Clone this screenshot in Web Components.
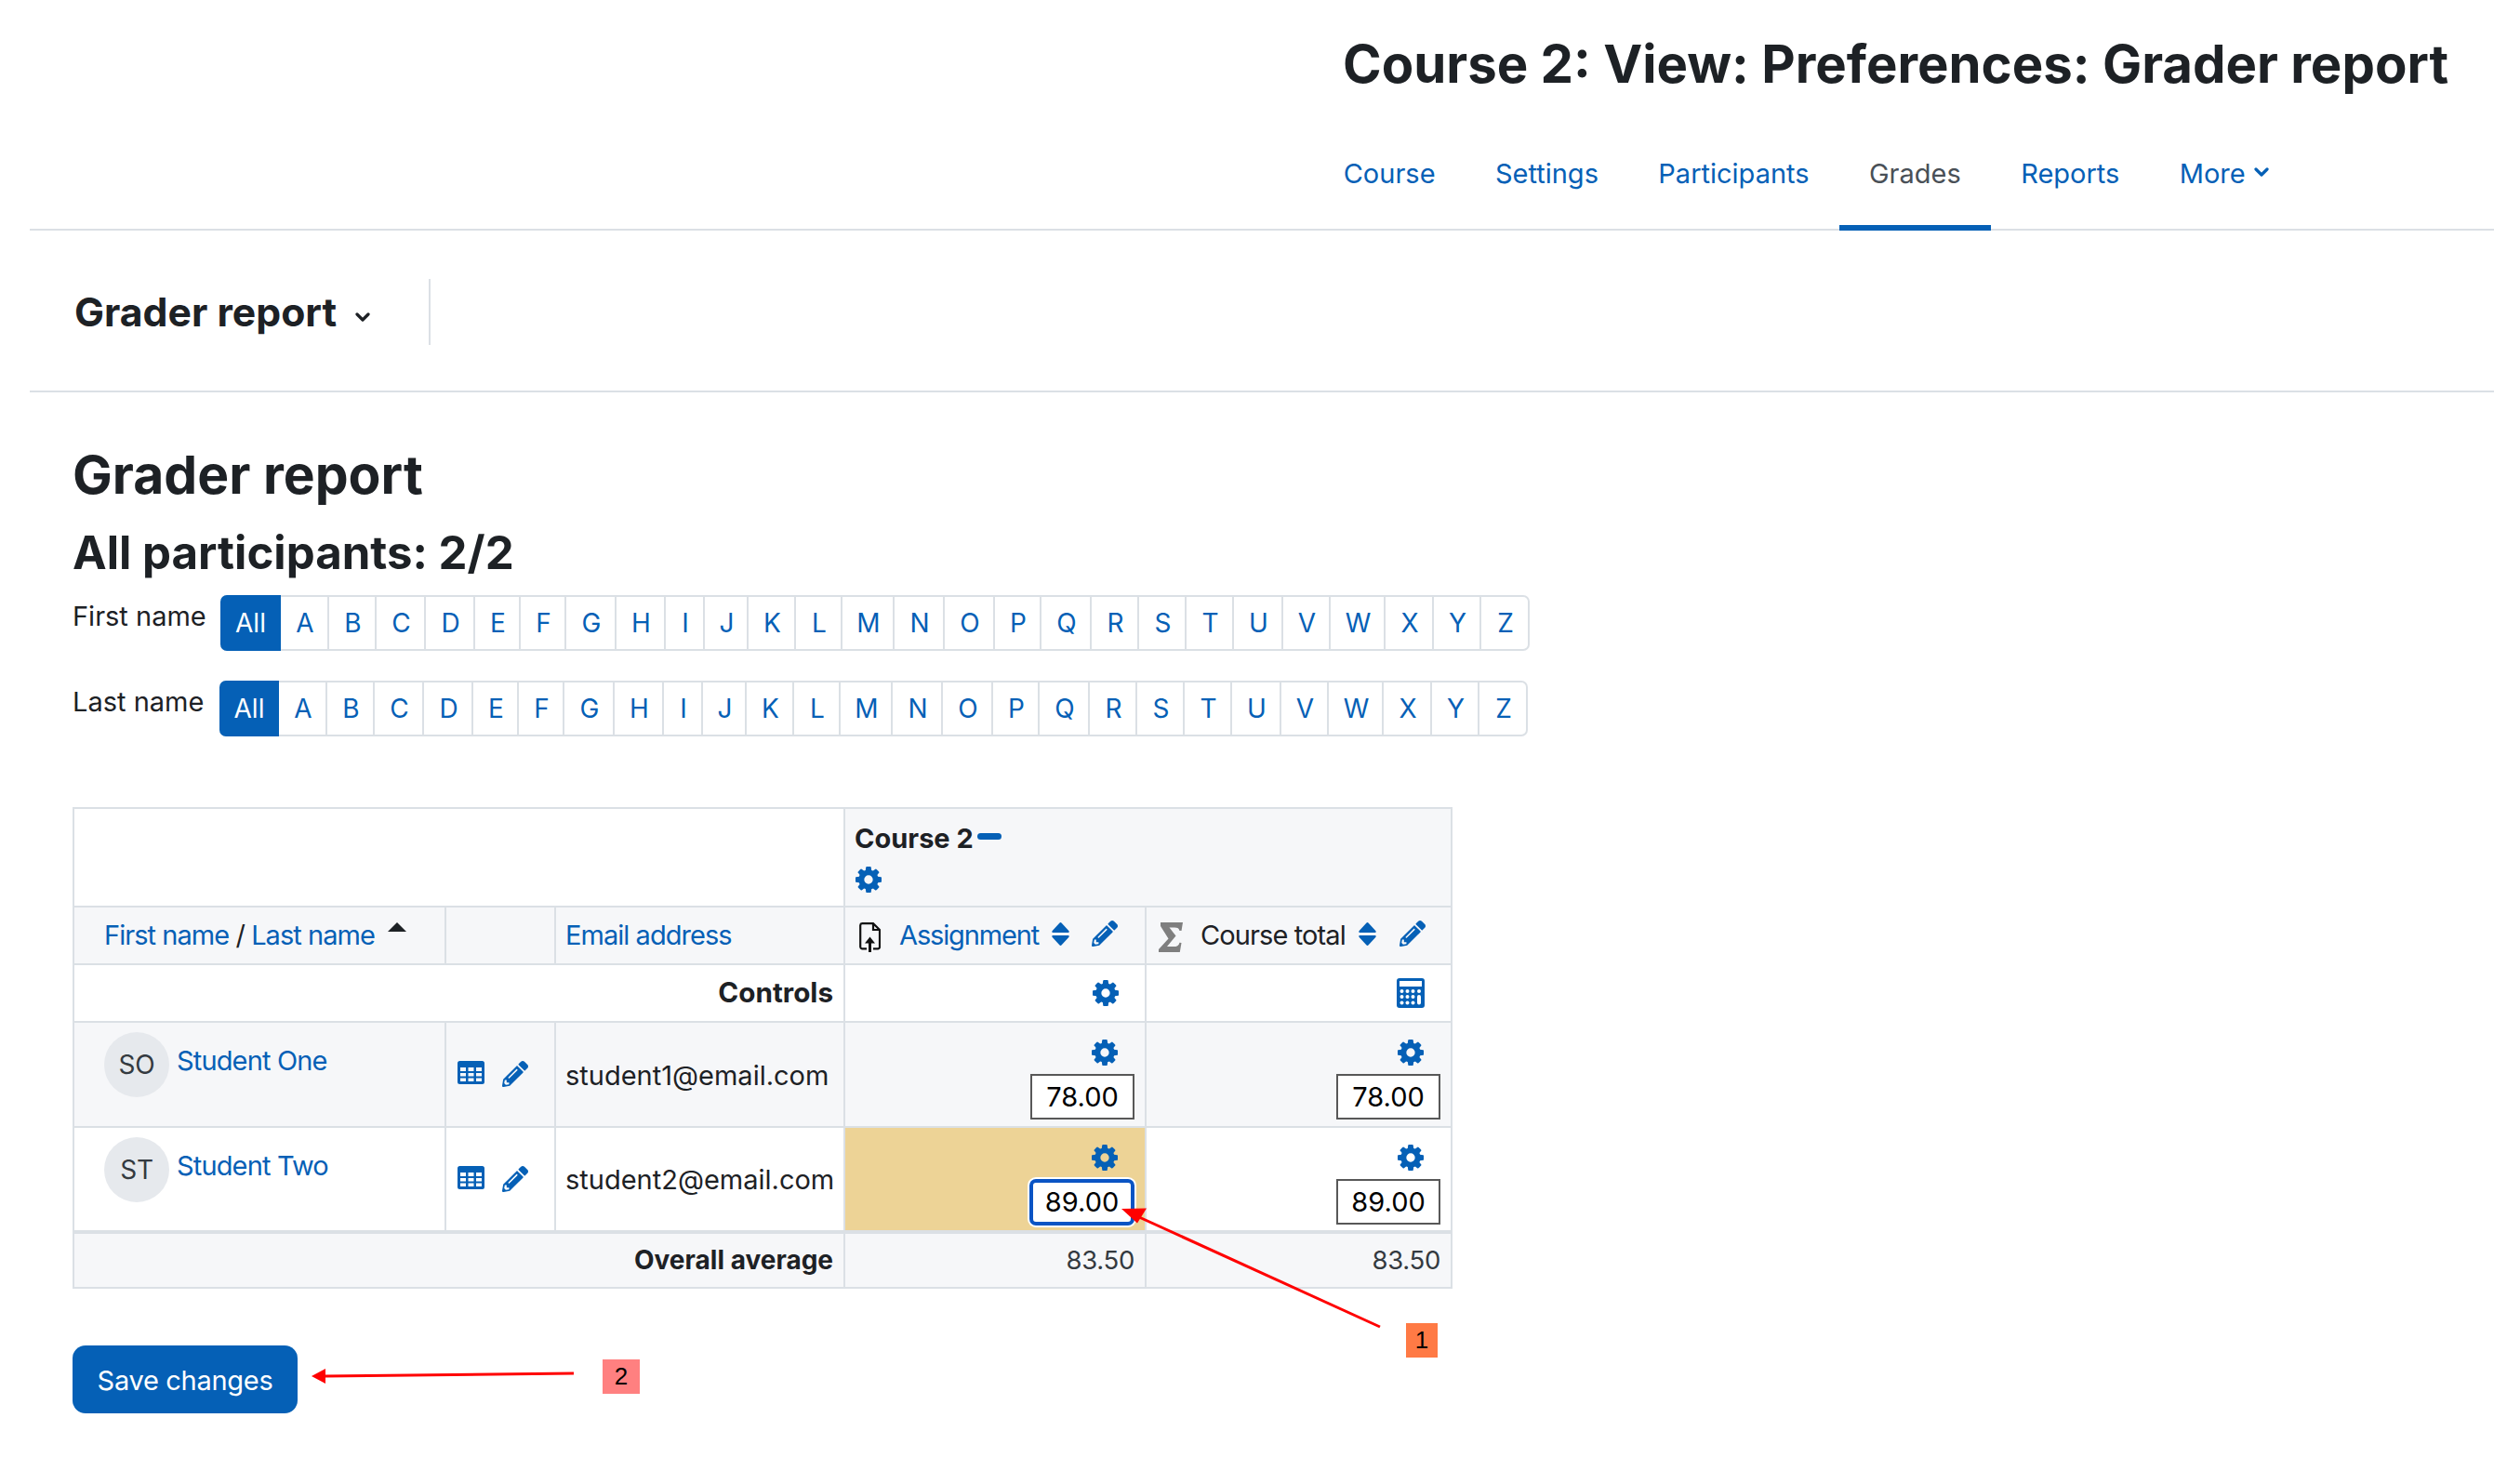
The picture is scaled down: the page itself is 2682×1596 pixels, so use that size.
<!DOCTYPE html>
<html lang="en"><head><meta charset="utf-8"><title>Grader report</title>
<style>
html,body{margin:0;background:#fff;overflow:hidden}
body{font:400 29px/1.2 Inter,"Liberation Sans",sans-serif;color:#1d2125;position:relative;width:2682px;height:1596px;
--blue:#0560b6;--line:#dbe0e5;--soft:#f6f7f9}
</style></head><body>
<x-page-header heading="Course 2: View: Preferences: Grader report">
  <x-tab>Course</x-tab><x-tab>Settings</x-tab><x-tab>Participants</x-tab><x-tab active>Grades</x-tab><x-tab>Reports</x-tab><x-tab more>More</x-tab>
</x-page-header>
<x-tertiary-nav>Grader report</x-tertiary-nav>
<x-main>
  <x-alpha-bar label="First name" labelw="159" allw="65"></x-alpha-bar>
  <x-alpha-bar label="Last name" labelw="158" allw="64"></x-alpha-bar>
  <x-grade-table></x-grade-table>
  <x-save-button>Save changes</x-save-button>
</x-main>
<x-annotations></x-annotations>
<script>
const P={
gear:'<svg viewBox="128 128 1536 1536" width="28" height="28" fill="currentColor" fill-rule="evenodd" style="display:block"><path d="M1152 896q0-106-75-181t-181-75-181 75-75 181 75 181 181 75 181-75 75-181zm512-109v222q0 12-8 23t-20 13l-185 28q-19 54-39 91 35 50 107 138 10 12 10 25t-9 23q-27 37-99 108t-94 71q-12 0-26-9l-138-108q-44 23-91 38-16 136-29 186-7 28-36 28h-222q-14 0-24.500-8.500t-11.500-21.500l-28-184q-49-16-90-37l-141 107q-10 9-25 9-14 0-25-11-126-114-165-168-7-10-7-23 0-12 8-23 15-21 51-66.500t54-70.500q-27-50-41-99l-183-27q-13-2-21-12.500t-8-23.500v-222q0-12 8-23t19-13l186-28q14-46 39-92-40-57-107-138-10-12-10-24 0-10 9-23 26-36 98.500-107.500t94.500-71.500q13 0 26 10l138 107q44-23 91-38 16-136 29-186 7-28 36-28h222q14 0 24.500 8.500t11.500 21.500l28 184q49 16 90 37l142-107q9-9 24-9 13 0 25 10 129 119 165 170 7 8 7 22 0 12-8 23-15 21-51 66.500t-54 70.500q26 50 41 98l183 28q13 2 21 12.500t8 23.500z"/></svg>',
pencil:'<svg viewBox="0 0 512 512" width="28" height="28" fill="currentColor" style="display:block"><path d="M497.900 142.100l-46.100 46.100c-4.700 4.700-12.300 4.700-17 0l-111-111c-4.700-4.700-4.700-12.300 0-17l46.100-46.100c18.700-18.700 49.100-18.700 67.900 0l60.100 60.100c18.800 18.700 18.800 49.100 0 67.900zM284.200 99.800L21.600 362.400.4 483.900c-2.900 16.400 11.400 30.600 27.800 27.800l121.500-21.300 262.600-262.600c4.700-4.700 4.700-12.300 0-17l-111-111c-4.800-4.700-12.400-4.700-17.100 0zM124.100 339.900c-5.500-5.500-5.500-14.300 0-19.800l154-154c5.500-5.500 14.300-5.500 19.800 0s5.500 14.300 0 19.800l-154 154c-5.500 5.500-14.300 5.500-19.800 0zM88 424h48v36.300l-64.500 11.300-31.100-31.100L51.700 376H88v48z"/></svg>',
table:'<svg viewBox="0 0 29 25" width="29" height="25" fill="currentColor" fill-rule="evenodd" style="display:block"><path d="M2.500 0h24a2.500 2.500 0 0 1 2.500 2.500v20a2.500 2.500 0 0 1-2.500 2.500h-24A2.500 2.500 0 0 1 0 22.500v-20A2.500 2.500 0 0 1 2.500 0zM3 7v4h6V7zm8.500 0v4h6V7zM20 7v4h6V7zM3 13v3.500h6V13zm8.500 0v3.500h6V13zM20 13v3.500h6V13zM3 18.500V22h6v-3.500zm8.500 0V22h6v-3.500zm8.500 0V22h6v-3.500z"/></svg>',
calc:'<svg viewBox="0 0 30 32" width="30" height="32" style="display:block"><rect width="30" height="32" rx="3" fill="currentColor"/><rect x="3" y="3" width="24" height="6" fill="#fff"/><g fill="#fff"><circle cx="5.500" cy="14" r="2"/><circle cx="11.500" cy="14" r="2"/><circle cx="17.500" cy="14" r="2"/><circle cx="24" cy="14" r="2"/><circle cx="5.500" cy="20" r="2"/><circle cx="11.500" cy="20" r="2"/><circle cx="17.500" cy="20" r="2"/><circle cx="5.500" cy="26.500" r="2"/><circle cx="11.500" cy="26.500" r="2"/><circle cx="17.500" cy="26.500" r="2"/><rect x="22" y="18" width="4" height="10.500" rx="2"/></g></svg>',
sort:'<svg viewBox="0 0 19 25" width="19" height="25" fill="currentColor" style="display:block"><path d="M8.300.7a1.700 1.700 0 0 1 2.400 0l7.600 8.400c.8.900.4 1.900-.9 1.900H1.600C.3 11-.1 10 .7 9.100zM8.300 24.300a1.700 1.700 0 0 0 2.400 0l7.600-8.400c.8-.9.4-1.900-.9-1.900H1.600C.3 14-.1 15 .7 15.900z"/></svg>',
file:'<svg viewBox="0 0 23 32" width="23" height="32" style="display:block"><path d="M3 1.200h12L22 8v18.500a2 2 0 0 1-1.800 1.800H15M8 28.300H3a2 2 0 0 1-1.800-1.800V3A2 2 0 0 1 3 1.200M15 1.500V8h6.500" fill="none" stroke="#111" stroke-width="2.200"/><path d="M11.500 15.500l5.500 7h-4v9.500h-3v-9.500h-4z" fill="#111"/></svg>',
sigma:'<svg viewBox="0 0 26 32" width="26" height="32" style="display:block"><path d="M2 0H26l-1.500 9-2.300-.2C22 6.500 20.500 5.500 17 5.500h-5.500l7 9L9 26h8c3 0 4.700-1.300 5.500-4.300l2 .3-1.700 10H0v-3L10.500 17.500 2 4z" fill="#7f7f7f"/></svg>',
chev:'<svg viewBox="0 0 16 10" width="16" height="10" style="display:block"><path d="M2 2l6 6 6-6" fill="none" stroke="currentColor" stroke-width="3.200" stroke-linecap="round" stroke-linejoin="round"/></svg>'
};
class Base extends HTMLElement{
  html(h){(this.shadowRoot||this.attachShadow({mode:'open'})).innerHTML=h}
}
customElements.define('x-icon',class extends Base{connectedCallback(){
  this.html(`<style>:host{display:inline-block;color:var(--blue);line-height:0}</style>${P[this.getAttribute('name')]}`);
}});
customElements.define('x-tab',class extends Base{connectedCallback(){
  const a=this.hasAttribute('active'),m=this.hasAttribute('more');
  this.html(`<style>:host{display:block;box-sizing:border-box;height:86px;padding:0 32.200px;border-bottom:6px solid ${a?'var(--blue)':'transparent'};color:${a?'#495057':'var(--blue)'};line-height:50px;white-space:nowrap}
  .w{display:flex;align-items:center;gap:9px}x-icon{margin-top:-4px}</style><div class="w"><slot></slot>${m?'<x-icon name="chev"></x-icon>':''}</div>`);
}});
customElements.define('x-page-header',class extends Base{connectedCallback(){
  this.html(`<style>:host{display:block;box-sizing:border-box;height:248px;margin-left:32px;padding-left:1380.500px;border-bottom:2px solid var(--line)}
  h1{margin:0 0 0 31.500px;padding-top:38px;font:700 56.300px/62px Inter,sans-serif;height:62px;white-space:nowrap}
  nav{display:flex;margin-top:62px}</style><h1>${this.getAttribute('heading')}</h1><nav><slot></slot></nav>`);
}});
customElements.define('x-tertiary-nav',class extends Base{connectedCallback(){
  this.html(`<style>:host{display:block;box-sizing:border-box;height:174px;margin-left:32px;padding:52px 0 0 48px;border-bottom:2px solid var(--line)}
  .i{box-sizing:border-box;width:383px;height:71px;border-right:2px solid var(--line);display:flex;align-items:center;gap:20px;font:700 42.700px/50px Inter,sans-serif;color:#1d2125}
  x-icon{color:#1d2125;margin-top:10px}</style><div class="i"><span><slot></slot></span><x-icon name="chev"></x-icon></div>`);
}});
customElements.define('x-main',class extends Base{connectedCallback(){
  this.html(`<style>:host{display:block;padding:58px 0 0 78px}
  h2{margin:0;font:700 57px/62px Inter,sans-serif}
  h3{margin:25px 0 19px;font:700 49.200px/54px Inter,sans-serif;white-space:nowrap}</style>
  <h2>Grader report</h2><h3>All participants: 2/2</h3><slot></slot>`);
}});
customElements.define('x-alpha-bar',class extends Base{connectedCallback(){
  const W=[52,51,53,53,49,49,54,53,42,47,51,50,56,54,54,50,54,51,51,51,53,51,59,52,51,50];
  const letters='ABCDEFGHIJKLMNOPQRSTUVWXYZ'.split('');
  this.html(`<style>:host{display:flex;margin-bottom:32px;height:60px}
  .l{flex:none;width:${this.getAttribute('labelw')}px;line-height:46px;white-space:nowrap}
  .b{display:flex;box-sizing:border-box;height:60px;border:2px solid var(--line);border-radius:7px;border-left:0}
  a{box-sizing:border-box;display:flex;align-items:center;justify-content:center;border-right:2px solid var(--line);color:var(--blue);font-size:28px;height:56px;padding:1px 0 0 2px}
  a:last-child{border-right:0}
  a.on{background:var(--blue);color:#fff;border:0;margin:-2px 0;height:60px;border-radius:7px 0 0 7px;padding:1px 0 0}</style>
  <span class="l">${this.getAttribute('label')}</span><div class="b"><a class="on" style="width:${this.getAttribute('allw')}px">All</a>${letters.map((c,i)=>`<a style="width:${W[i]}px">${c}</a>`).join('')}</div>`);
}});
customElements.define('x-grade-input',class extends Base{connectedCallback(){
  const f=this.hasAttribute('focused');
  this.html(`<style>:host{display:block;box-sizing:border-box;width:${f?113:112}px;height:${f?50:49}px;background:#fff;color:#000;text-align:center;font-size:29px;
  ${f?'border:4px solid #0a54c4;border-radius:7px;box-shadow:0 0 0 2px #fff;line-height:42px;':'border:2px solid #585858;line-height:46px;'}}</style><slot></slot>`);
}});
customElements.define('x-grade-cell',class extends Base{connectedCallback(){
  const v=this.getAttribute('value'),f=this.hasAttribute('focused');
  this.html(`<style>:host{display:flex;flex-direction:column;align-items:flex-end;padding-right:${this.getAttribute('pr')||11}px}
  x-icon{margin:18px 18px 9px 0}</style><x-icon name="gear"></x-icon><x-grade-input ${f?'focused':''}>${v}</x-grade-input>`);
}});
customElements.define('x-user',class extends Base{connectedCallback(){
  this.html(`<style>:host{display:flex;gap:8px;padding:10px 0 0 32px;height:94px;box-sizing:content-box}
  .a{flex:none;width:70px;height:70px;border-radius:50%;background:#e6e9ed;display:flex;align-items:center;justify-content:center;color:#343a40;font-size:28px;padding-top:2px;box-sizing:border-box;letter-spacing:-.2px}
  .n{color:var(--blue);letter-spacing:-.85px;line-height:34px;margin-top:14px;white-space:nowrap}</style>
  <div class="a">${this.getAttribute('ini')}</div><div class="n"><slot></slot></div>`);
}});
customElements.define('x-grade-table',class extends Base{connectedCallback(){
  const gc=(v,cls,pr,f)=>`<td class="g ${cls||''}"><x-grade-cell value="${v}" ${pr?`pr="${pr}"`:''} ${f?'focused':''}></x-grade-cell></td>`;
  const row=(ini,name,mail,v,soft,f)=>`<tr class="${soft?'soft':''}" style="height:113px"><td class="u"><x-user ini="${ini}">${name}</x-user></td>
   <td class="ic"><span class="ics"><x-icon name="table"></x-icon><x-icon name="pencil"></x-icon></span></td>
   <td class="m">${mail}</td>${gc(v,f?'hl':'',11,f)}${gc(v,'',11)}</tr>`;
  this.html(`<style>:host{display:block;margin-top:76px}
  table{border-collapse:collapse;table-layout:fixed;width:1484px;margin:0;font-size:29px}
  td{border:2px solid var(--line);padding:0}
  .soft td{background:var(--soft)}
  a{color:var(--blue);text-decoration:none}
  .cat{vertical-align:top;padding:12px 0 0 11px}
  .cn{display:flex;align-items:flex-start;font-weight:700;height:50px;line-height:40px;font-size:29px;margin-left:-1px}
  .minus{width:26px;height:7px;border-radius:3.500px;background:var(--blue);margin:14px 0 0 4px}
  .h{white-space:nowrap}
  .fl{display:flex;align-items:center;height:60px}
  .names{padding-left:32px;letter-spacing:-.95px}
  .tri{width:0;height:0;border:10px solid transparent;border-top:0;border-bottom:10px solid #1d2125;margin:0 0 19px 14px}
  .email{padding-left:10px;letter-spacing:-.95px}
  .ctrl{font-weight:700;font-size:29.700px;text-align:right;padding-right:11px}
  .rg{display:flex;justify-content:flex-end;padding-right:28px}
  .u{vertical-align:top}
  .ics{display:flex;align-items:flex-start;padding:0 0 0 12px;gap:19px;margin-top:-1px}
  .m{padding-left:10px;padding-top:3px;white-space:nowrap}
  .g{vertical-align:top}
  .hl{background:#edd396!important}
  .avg{font-weight:700;font-size:28px;text-align:right;padding-right:11px}
  .num{font-size:27.500px;text-align:right;padding-right:11px;letter-spacing:-.3px;color:#343a40}
  .thick td{border-top-width:4px}
  </style>
  <table><colgroup><col style="width:400px"><col style="width:118px"><col style="width:311px"><col style="width:324px"><col style="width:329px"></colgroup>
  <tr style="height:106px"><td colspan="3"></td><td colspan="2" class="cat" style="background:var(--soft)"><div class="cn"><span>Course 2</span><span class="minus"></span></div><x-icon name="gear"></x-icon></td></tr>
  <tr class="soft h" style="height:60px"><td><div class="fl names"><a>First name</a>&nbsp;/&nbsp;<a>Last name</a><span class="tri"></span></div></td><td></td><td><div class="fl email"><a>Email address</a></div></td>
   <td><div class="fl" style="padding-left:15px"><x-icon name="file" style="margin-top:4px"></x-icon><a style="margin:0 14px 0 20px;letter-spacing:-1.150px">Assignment</a><x-icon name="sort" style="margin-top:-4px"></x-icon><x-icon name="pencil" style="margin:-4px 0 0 24px"></x-icon></div></td>
   <td><div class="fl" style="padding-left:13px"><x-icon name="sigma" style="margin-top:4px"></x-icon><span style="margin:0 14px 0 19px;letter-spacing:-.9px">Course total</span><x-icon name="sort" style="margin-top:-4px"></x-icon><x-icon name="pencil" style="margin:-4px 0 0 25px"></x-icon></div></td></tr>
  <tr style="height:62px"><td colspan="3" class="ctrl">Controls</td><td><div class="rg"><x-icon name="gear"></x-icon></div></td><td><div class="rg"><x-icon name="calc"></x-icon></div></td></tr>
  ${row('SO','Student One','student1@email.com','78.00',true)}
  ${row('ST','Student Two','student2@email.com','89.00',false,true)}
  <tr class="soft thick" style="height:60px"><td colspan="3" class="avg">Overall average</td><td class="num">83.50</td><td class="num">83.50</td></tr>
  </table>`);
}});
customElements.define('x-save-button',class extends Base{connectedCallback(){
  this.html(`<style>:host{display:flex;align-items:center;justify-content:center;box-sizing:border-box;width:242px;height:73px;margin-top:61px;padding-top:3px;background:var(--blue);color:#fff;border-radius:14px;letter-spacing:-.3px}</style><slot></slot>`);
}});
customElements.define('x-annotations',class extends Base{connectedCallback(){
  this.html(`<style>:host{position:absolute;left:0;top:0;width:2682px;height:1596px;pointer-events:none}
  svg{position:absolute;left:0;top:0}
  .t{position:absolute;display:flex;align-items:center;justify-content:center;font:26px "Liberation Sans",sans-serif;color:#000}</style>
  <svg width="2682" height="1596"><g stroke="#f00" stroke-width="3" fill="none"><path d="M1484 1427L1225 1309"/><path d="M617 1477L350 1480"/></g>
  <g fill="#f00"><path d="M1206 1300l27-.5-10 16z"/><path d="M335 1480l15-8v16z"/></g></svg>
  <div class="t" style="left:1512px;top:1423px;width:34px;height:37px;background:#ff7a45">1</div>
  <div class="t" style="left:648px;top:1462px;width:40px;height:37px;background:#ff8080">2</div>`);
}});
</script>
</body></html>
